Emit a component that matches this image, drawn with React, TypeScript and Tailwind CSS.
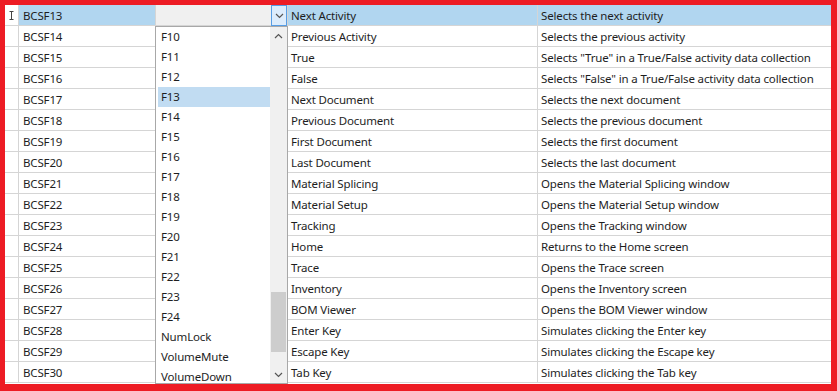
import React from 'react';

const rows = [
  ['BCSF13', 'Next Activity', 'Selects the next activity'],
  ['BCSF14', 'Previous Activity', 'Selects the previous activity'],
  ['BCSF15', 'True', 'Selects "True" in a True/False activity data collection'],
  ['BCSF16', 'False', 'Selects "False" in a True/False activity data collection'],
  ['BCSF17', 'Next Document', 'Selects the next document'],
  ['BCSF18', 'Previous Document', 'Selects the previous document'],
  ['BCSF19', 'First Document', 'Selects the first document'],
  ['BCSF20', 'Last Document', 'Selects the last document'],
  ['BCSF21', 'Material Splicing', 'Opens the Material Splicing window'],
  ['BCSF22', 'Material Setup', 'Opens the Material Setup window'],
  ['BCSF23', 'Tracking', 'Opens the Tracking window'],
  ['BCSF24', 'Home', 'Returns to the Home screen'],
  ['BCSF25', 'Trace', 'Opens the Trace screen'],
  ['BCSF26', 'Inventory', 'Opens the Inventory screen'],
  ['BCSF27', 'BOM Viewer', 'Opens the BOM Viewer window'],
  ['BCSF28', 'Enter Key', 'Simulates clicking the Enter key'],
  ['BCSF29', 'Escape Key', 'Simulates clicking the Escape key'],
  ['BCSF30', 'Tab Key', 'Simulates clicking the Tab key'],
];

const keys = [
  'F10', 'F11', 'F12', 'F13', 'F14', 'F15', 'F16', 'F17', 'F18', 'F19', 'F20',
  'F21', 'F22', 'F23', 'F24', 'NumLock', 'VolumeMute', 'VolumeDown',
];

function Chevron({ up = false }: { up?: boolean }) {
  return (
    <svg width="9" height="6" viewBox="0 0 9 6" className="block">
      <polyline
        points={up ? '1,5 4.5,1.5 8,5' : '1,1 4.5,4.5 8,1'}
        fill="none"
        stroke="#555"
        strokeWidth="1.2"
      />
    </svg>
  );
}

function IBeam() {
  return (
    <svg width="5" height="9" viewBox="0 0 5 9" className="block">
      <path d="M0.5 0.5h4M0.5 8.5h4M2.5 0.5v8" stroke="#444" strokeWidth="1" fill="none" />
    </svg>
  );
}

export default function App() {
  return (
    <div
      className="w-[837px] h-[391px] bg-[#ed1c24] pt-[5px] pl-[5px] pr-[6px] pb-[7px] overflow-hidden"
      style={{ fontFamily: '"Noto Sans", "Open Sans", sans-serif' }}
    >
      <div className="relative w-full h-full bg-white text-[11.5px] tracking-[-0.15px] text-[#1e1e1e]">
        {rows.map(([code, name, desc], i) => {
          const selected = i === 0;
          return (
            <div key={code} className="flex h-[21px] border-b border-[#d5d5d5]">
              <div className="w-[14px] shrink-0 border-r border-[#d5d5d5] flex items-center justify-center">
                {selected && <IBeam />}
              </div>
              <div
                className={`w-[137px] shrink-0 border-r border-[#d5d5d5] pl-[4px] pt-[1px] leading-[19px] ${
                  selected ? 'bg-[#b1d6f0]' : ''
                }`}
              >
                {code}
              </div>
              <div
                className={`w-[132px] shrink-0 border-r border-[#d5d5d5] flex ${
                  selected ? 'bg-[#f0f0f0]' : ''
                }`}
              >
                {selected && (
                  <>
                    <div className="flex-1" />
                    <div className="w-[16px] h-[21px] border border-[#569de5] bg-[#dcecfc] flex items-center justify-center">
                      <Chevron />
                    </div>
                  </>
                )}
              </div>
              <div
                className={`w-[250px] shrink-0 border-r border-[#d5d5d5] pl-[3px] pt-[1px] leading-[19px] ${
                  selected ? 'bg-[#b1d6f0]' : ''
                }`}
              >
                {name}
              </div>
              <div
                className={`flex-1 pl-[3px] pt-[1px] leading-[19px] whitespace-nowrap ${
                  selected ? 'bg-[#b1d6f0]' : ''
                }`}
              >
                {desc}
              </div>
            </div>
          );
        })}

        {/* Dropdown list */}
        <div className="absolute left-[150px] top-[21px] w-[133px] h-[358px] bg-white border border-[#a8a8a8] flex">
          <div className="flex-1 pl-[2px]">
            {keys.map((k) => (
              <div
                key={k}
                className={`h-[20px] leading-[20px] pl-[3px] ${k === 'F13' ? 'bg-[#c1dcf2]' : ''}`}
              >
                {k}
              </div>
            ))}
          </div>
          <div className="w-[17px] bg-[#f0f0f0] flex flex-col">
            <div className="h-[17px] flex items-center justify-center">
              <Chevron up />
            </div>
            <div className="flex-1 flex flex-col">
              <div className="h-[248px]" />
              <div className="h-[60px] mx-[1px] bg-[#cdcdcd]" />
              <div className="flex-1" />
            </div>
            <div className="h-[17px] flex items-center justify-center">
              <Chevron />
            </div>
          </div>
        </div>
      </div>
    </div>
  );
}
